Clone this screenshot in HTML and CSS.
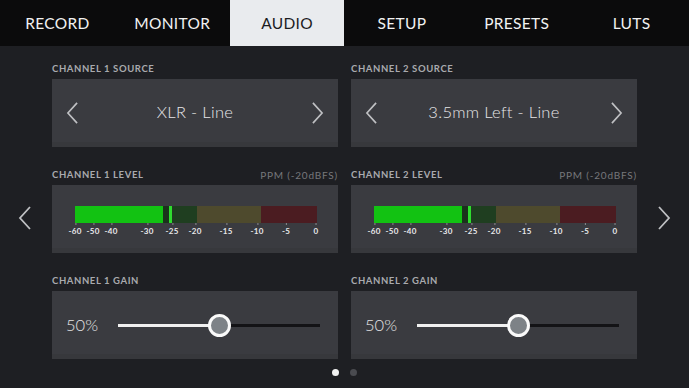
FILE: index.html
```html
<!DOCTYPE html>
<html lang="en">
<head>
    <meta charset="UTF-8">
    <meta name="viewport" content="width=device-width, initial-scale=1.0">
    <title>Audio</title>
    <link rel="stylesheet" href="styles.css">
</head>
<body>
    <nav class="tabs">
        <div class="tab">RECORD</div>
        <div class="tab">MONITOR</div>
        <div class="tab active">AUDIO</div>
        <div class="tab">SETUP</div>
        <div class="tab">PRESETS</div>
        <div class="tab">LUTS</div>
    </nav>

    <main class="panel-grid">
        <!-- sources -->
        <section class="field col1">
            <div class="label">CHANNEL 1 SOURCE</div>
            <div class="box picker">
                <svg class="chev" viewBox="0 0 14 24"><polyline points="12,1 2,12 12,23"/></svg>
                <span class="value">XLR - Line</span>
                <svg class="chev" viewBox="0 0 14 24"><polyline points="2,1 12,12 2,23"/></svg>
            </div>
        </section>
        <section class="field col2">
            <div class="label">CHANNEL 2 SOURCE</div>
            <div class="box picker">
                <svg class="chev" viewBox="0 0 14 24"><polyline points="12,1 2,12 12,23"/></svg>
                <span class="value">3.5mm Left - Line</span>
                <svg class="chev" viewBox="0 0 14 24"><polyline points="2,1 12,12 2,23"/></svg>
            </div>
        </section>

        <!-- levels -->
        <div class="nav-arrow prev">
            <svg viewBox="0 0 14 24"><polyline points="12,1 2,12 12,23"/></svg>
        </div>
        <section class="field col1">
            <div class="label"><span>CHANNEL 1 LEVEL</span><span class="dim">PPM (-20dBFS)</span></div>
            <div class="box meter-box">
                <div class="meter">
                    <div class="bar">
                        <div class="seg green"></div>
                        <div class="seg gap"></div>
                        <div class="seg peak"></div>
                        <div class="seg dkgreen"></div>
                        <div class="seg olive"></div>
                        <div class="seg red"></div>
                    </div>
                    <div class="scale">
                        <span style="left:0px">-60</span>
                        <span style="left:18px">-50</span>
                        <span style="left:36px">-40</span>
                        <span style="left:72px">-30</span>
                        <span style="left:97px">-25</span>
                        <span style="left:120px">-20</span>
                        <span style="left:151px">-15</span>
                        <span style="left:182px">-10</span>
                        <span style="left:211px">-5</span>
                        <span style="left:241px">0</span>
                    </div>
                </div>
            </div>
        </section>
        <section class="field col2">
            <div class="label"><span>CHANNEL 2 LEVEL</span><span class="dim">PPM (-20dBFS)</span></div>
            <div class="box meter-box">
                <div class="meter">
                    <div class="bar">
                        <div class="seg green"></div>
                        <div class="seg gap"></div>
                        <div class="seg peak"></div>
                        <div class="seg dkgreen"></div>
                        <div class="seg olive"></div>
                        <div class="seg red"></div>
                    </div>
                    <div class="scale">
                        <span style="left:0px">-60</span>
                        <span style="left:18px">-50</span>
                        <span style="left:36px">-40</span>
                        <span style="left:72px">-30</span>
                        <span style="left:97px">-25</span>
                        <span style="left:120px">-20</span>
                        <span style="left:151px">-15</span>
                        <span style="left:182px">-10</span>
                        <span style="left:211px">-5</span>
                        <span style="left:241px">0</span>
                    </div>
                </div>
            </div>
        </section>
        <div class="nav-arrow next">
            <svg viewBox="0 0 14 24"><polyline points="2,1 12,12 2,23"/></svg>
        </div>

        <!-- gain -->
        <section class="field col1">
            <div class="label">CHANNEL 1 GAIN</div>
            <div class="box gain">
                <span class="pct">50%</span>
                <div class="track">
                    <div class="fill" style="width:50%"></div>
                    <div class="knob" style="left:50%"></div>
                </div>
            </div>
        </section>
        <section class="field col2">
            <div class="label">CHANNEL 2 GAIN</div>
            <div class="box gain">
                <span class="pct">50%</span>
                <div class="track">
                    <div class="fill" style="width:50%"></div>
                    <div class="knob" style="left:50%"></div>
                </div>
            </div>
        </section>
    </main>

    <div class="dots">
        <span class="dot on"></span>
        <span class="dot"></span>
    </div>
</body>
</html>
```

FILE: styles.css
```css
body {
    margin: 0;
    padding: 0;
    width: 689px;
    height: 388px;
    overflow: hidden;
    background-color: #1e1f23;
    color: #e4e4e6;
    font-family: Lato, "Open Sans", sans-serif;
}
.tabs {
    display: flex;
    height: 46px;
    background-color: #0b0b0c;
}
.tab {
    flex: 1;
    display: flex;
    align-items: center;
    justify-content: center;
    font-size: 15.5px;
    letter-spacing: 0.3px;
    color: #f2f2f2;
}
.tab.active {
    background-color: #e9ebee;
    color: #1c1c1e;
}
.panel-grid {
    display: grid;
    grid-template-columns: 39px 286px 286px 39px;
    column-gap: 13px;
    row-gap: 21px;
    padding-top: 16px;
}
.col1 {
    grid-column: 2;
}
.col2 {
    grid-column: 3;
}
.label {
    display: flex;
    justify-content: space-between;
    height: 14px;
    line-height: 14px;
    margin-bottom: 3px;
    font-size: 9.5px;
    font-weight: bold;
    letter-spacing: 0.6px;
    color: #a9aaae;
}
.label .dim {
    color: #77787c;
    font-size: 10px;
    font-weight: normal;
    letter-spacing: 0.8px;
}
.box {
    height: 68px;
    box-sizing: border-box;
    background-color: #3a3b40;
    box-shadow: inset 0 -5px 0 #37383c;
}
.picker {
    display: flex;
    align-items: center;
    padding: 0 14px;
}
.picker .value {
    flex: 1;
    text-align: center;
    font-size: 16.5px;
    font-weight: 300;
    color: #e6e6e8;
    letter-spacing: 0.3px;
    margin-top: -2px;
}
.chev {
    width: 13px;
    height: 22px;
}
svg polyline {
    fill: none;
    stroke: #bfc0c3;
    stroke-width: 1.8;
}
.nav-arrow {
    grid-row: 2;
    align-self: end;
    height: 24px;
    margin-bottom: 23px;
}
.nav-arrow svg {
    width: 14px;
    height: 24px;
}
.nav-arrow.prev {
    grid-column: 1;
    padding-left: 18px;
}
.nav-arrow.next {
    grid-column: 4;
    padding-left: 7px;
}
.meter-box {
    padding: 21px 0 0 23px;
}
.meter {
    width: 242px;
}
.bar {
    display: flex;
    height: 17px;
}
.seg.green { width: 88px; background-color: #12c212; }
.seg.gap { width: 6px; background-color: #1a331b; }
.seg.peak { width: 3px; background-color: #2fdc2f; }
.seg.dkgreen { width: 25px; background-color: #1f3e20; }
.seg.olive { width: 64px; background-color: #4e4a2d; }
.seg.red { width: 56px; background-color: #4b1c21; }
.scale {
    position: relative;
    height: 14px;
}
.scale span {
    position: absolute;
    top: 3px;
    transform: translateX(-50%);
    font-size: 8px;
    font-weight: bold;
    color: #e8e8ea;
    letter-spacing: 0.3px;
}
.scale span::before {
    content: "";
    position: absolute;
    left: 50%;
    top: -3px;
    width: 1px;
    height: 2px;
    background-color: #8a8b8e;
}
.gain {
    display: flex;
    align-items: center;
    padding: 0 18px 0 14px;
}
.pct {
    width: 32px;
    margin-right: 20px;
    font-size: 16.5px;
    font-weight: 300;
    color: #e4e4e6;
}
.track {
    position: relative;
    flex: 1;
    height: 3px;
    background-color: #131316;
}
.fill {
    height: 3px;
    background-color: #f0f0f0;
}
.knob {
    position: absolute;
    top: -10px;
    width: 23px;
    height: 23px;
    margin-left: -11.5px;
    box-sizing: border-box;
    border: 3px solid #fafafa;
    border-radius: 50%;
    background-color: #7d8287;
}
.dots {
    display: flex;
    justify-content: center;
    gap: 11px;
    margin-top: 10px;
}
.dot {
    width: 7px;
    height: 7px;
    border-radius: 50%;
    background-color: #4a4b50;
}
.dot.on {
    background-color: #f2f2f2;
}
```
